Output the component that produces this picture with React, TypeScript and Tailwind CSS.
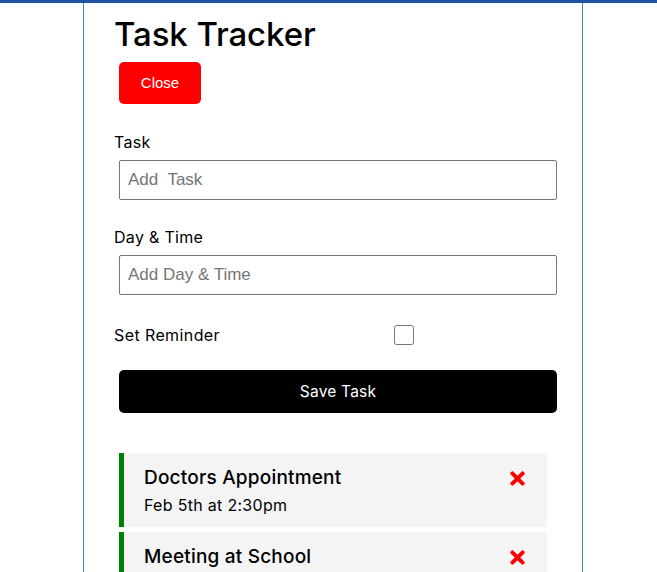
import React, { useState } from 'react';
import { FaTimes } from 'react-icons/fa';

type Task = { id: number; text: string; day: string; reminder: boolean };

const initialTasks: Task[] = [
  { id: 1, text: 'Doctors Appointment', day: 'Feb 5th at 2:30pm', reminder: true },
  { id: 2, text: 'Meeting at School', day: 'Feb 6th at 1:30pm', reminder: true },
  { id: 3, text: 'Food Shopping', day: 'Feb 5th at 2:30pm', reminder: false },
];

const App: React.FC = () => {
  const [tasks, setTasks] = useState<Task[]>(initialTasks);
  const [text, setText] = useState('');
  const [day, setDay] = useState('');
  const [reminder, setReminder] = useState(false);

  const onSubmit = (e: React.FormEvent) => {
    e.preventDefault();
    if (!text) return;
    setTasks([...tasks, { id: Date.now(), text, day, reminder }]);
    setText('');
    setDay('');
    setReminder(false);
  };

  return (
    <div className="min-h-screen bg-white font-['Inter',sans-serif] text-black">
      <div className="h-[3px] bg-[#1c54a0]" />
      <div className="ml-[83px] w-[500px] min-h-[569px] border-x border-[#4682b4] px-[30px] pt-[9px]">
        <h1 className="text-[33px] leading-[44px] font-medium tracking-[-0.1px]">Task Tracker</h1>
        <button className="mt-[6px] ml-[5px] w-[82px] h-[42px] rounded-[5px] bg-[#ff0000] text-white text-[15px] font-['Liberation_Sans',sans-serif]">
          Close
        </button>

        <form onSubmit={onSubmit} className="mt-[20px]">
          <div>
            <label className="block text-[16px] leading-[36px] tracking-[0.3px]">Task</label>
            <input
              type="text"
              placeholder="Add  Task"
              value={text}
              onChange={e => setText(e.target.value)}
              className="block mx-[5px] w-[438px] h-[40px] border border-[#767676] rounded-[2px] px-[8px] text-[17px] font-['Liberation_Sans',sans-serif] placeholder:text-[#757575]"
            />
          </div>
          <div className="mt-[19px]">
            <label className="block text-[16px] leading-[36px] tracking-[0.3px]">Day &amp; Time</label>
            <input
              type="text"
              placeholder="Add Day & Time"
              value={day}
              onChange={e => setDay(e.target.value)}
              className="block mx-[5px] w-[438px] h-[40px] border border-[#767676] rounded-[2px] px-[8px] text-[17px] font-['Liberation_Sans',sans-serif] placeholder:text-[#757575]"
            />
          </div>
          <div className="mt-[25px] flex items-center h-[30px]">
            <label className="w-[280px] text-[16px] tracking-[0.4px]">Set Reminder</label>
            <input
              type="checkbox"
              checked={reminder}
              onChange={e => setReminder(e.currentTarget.checked)}
              className="w-[20px] h-[20px] m-0"
            />
          </div>
          <button
            type="submit"
            className="mt-[20px] ml-[5px] w-[438px] h-[43px] rounded-[5px] bg-black text-white text-[15.5px] tracking-[0.2px]"
          >
            Save Task
          </button>
        </form>

        <div className="mt-[40px] flex flex-col gap-[5px]">
          {tasks.map(task => (
            <div
              key={task.id}
              className={`mx-[5px] bg-[#f4f4f4] pl-[20px] pr-[20px] pt-[11px] pb-[9px] border-l-[5px] ${task.reminder ? 'border-[#008000]' : 'border-transparent'}`}
            >
              <h3 className="flex items-center justify-between text-[19px] font-medium leading-[28px] tracking-[0.2px]">
                {task.text}
                <FaTimes className="text-[#ff0000] w-[15px] h-[21px] mr-[2px] cursor-pointer" onClick={() => setTasks(tasks.filter(t => t.id !== task.id))} />
              </h3>
              <p className="text-[16px] leading-[26px] tracking-[0.3px]">{task.day}</p>
            </div>
          ))}
        </div>
      </div>
    </div>
  );
};

export default App;
